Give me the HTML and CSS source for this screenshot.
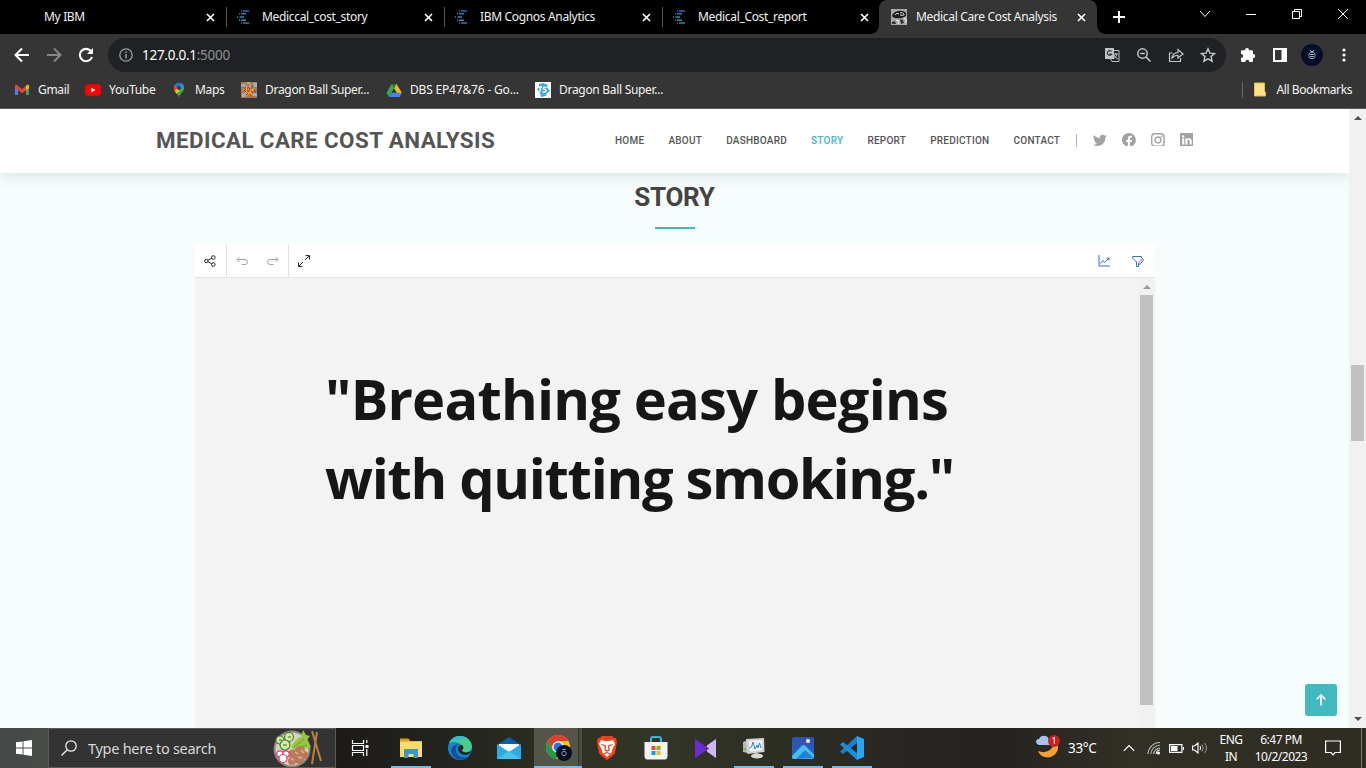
FILE: index.html
```html
<!DOCTYPE html>
<html lang="en">
<head>
<meta charset="utf-8">
<title>Medical Care Cost Analysis</title>
<link rel="stylesheet" href="styles.css">
</head>
<body>
<svg class="defs" aria-hidden="true">
  <symbol id="close" viewBox="0 0 9 9"><path d="M1 1l7 7M8 1l-7 7" stroke="#fff" stroke-width="1.7" fill="none"/></symbol>
  <symbol id="cognos" viewBox="0 0 16 16">
    <g stroke-width="1.4" fill="none">
      <path d="M4 2h1M6 2h6" stroke="#2c6ac0"/><path d="M2 4.800h1M4 4.800h5" stroke="#2f7fb8"/>
      <path d="M0 8h1M2.500 8h4.500" stroke="#2f8cac"/><path d="M2 11.200h1M4 11.200h5" stroke="#3a8fa4"/><path d="M4 14h1M6 14h6" stroke="#2c7fa0"/>
    </g>
  </symbol>
</svg>

<div class="tabs">
  <div class="tab"><span class="fav"></span><span class="tt"><b class="t">My IBM</b></span><svg class="x"><use href="#close"/></svg></div>
  <div class="tab"><svg class="fav"><use href="#cognos"/></svg><span class="tt"><b class="t">Mediccal_cost_story</b></span><svg class="x"><use href="#close"/></svg></div>
  <div class="tab"><svg class="fav"><use href="#cognos"/></svg><span class="tt"><b class="t">IBM Cognos Analytics</b></span><svg class="x"><use href="#close"/></svg></div>
  <div class="tab last"><svg class="fav"><use href="#cognos"/></svg><span class="tt"><b class="t">Medical_Cost_report</b></span><svg class="x"><use href="#close"/></svg></div>
  <div class="tab active">
    <svg class="fav" viewBox="0 0 16 16"><rect width="16" height="16" fill="#a9a9a9"/><path d="M1 7q1-4 6-5 6-1 8 2 1 3-2 4-3 2-6 1-4 1-6-2z" fill="#1c1c1c"/><path d="M4 6q2-3 4-1M9 4q3-1 4 1t-4 1" stroke="#ddd" fill="none"/><path d="M1 13l3-1 1 3H1zM9 10l3 1 1 3-3 1z" fill="#333"/><path d="M5 11l3 1-1 3M13 9l2 1v4" stroke="#eee" fill="none"/></svg>
    <span class="tt"><b class="t">Medical Care Cost Analysis</b></span><svg class="x"><use href="#close"/></svg>
  </div>
  <svg class="plus" viewBox="0 0 12 12"><path d="M6 0v12M0 6h12" stroke="#fff" stroke-width="2"/></svg>
  <div class="winctl">
    <svg width="12" height="12" viewBox="0 0 12 12"><path d="M1 3l5 5.500 5-5.500"/></svg>
    <svg width="12" height="12" viewBox="0 0 12 12"><path d="M1 6.500h10"/></svg>
    <svg width="12" height="12" viewBox="0 0 12 12"><path d="M1.500 3.500h7v7h-7zM3.500 3.500v-2h7v7h-2"/></svg>
    <svg width="12" height="12" viewBox="0 0 12 12"><path d="M1 1l10 10M11 1L1 11"/></svg>
  </div>
</div>

<div class="toolbar">
  <svg class="nav1" viewBox="0 0 16 16"><path d="M15 8H2M8 1.500L1.500 8 8 14.500" stroke="#fff" stroke-width="2" fill="none"/></svg>
  <svg class="nav2" viewBox="0 0 16 16"><path d="M1 8h13M8 1.500L14.500 8 8 14.500" stroke="#868686" stroke-width="2" fill="none"/></svg>
  <svg class="nav3" viewBox="0 0 16 16"><path d="M13.200 4.500A6.200 6.200 0 1 0 14 10" stroke="#fff" stroke-width="2.100" fill="none"/><path d="M15 1v6H9z" fill="#fff"/></svg>
  <div class="omni">
    <svg class="info" viewBox="0 0 14 14"><circle cx="7" cy="7" r="6.200" fill="none" stroke="#9aa0a6" stroke-width="1.300"/><path d="M7 6v4.500M7 3.500v1.500" stroke="#9aa0a6" stroke-width="1.500"/></svg>
    <span class="url"><b class="t">127.0.0.1<i>:5000</i></b></span>
    <div class="omni-icons">
      <svg viewBox="0 0 16 16"><rect x="1" y="1" width="9" height="11" fill="#bfc1c4"/><path d="M7.500 4.500A2.300 2.300 0 1 0 7.700 7H5.500" fill="none" stroke="#333" stroke-width="1.100"/><path d="M10 3.500h5v11H8l-1.500-2.500" fill="none" stroke="#bfc1c4"/><path d="M9 7h5M11.500 6v1M13 7q-1 4-4 5M10 8q1 3 4 4" stroke="#bfc1c4" fill="none"/></svg>
      <svg viewBox="0 0 16 16"><circle cx="6.500" cy="6.500" r="4.700" fill="none" stroke="#c4c6c9" stroke-width="1.500"/><path d="M10 10l4.500 4.500M4.300 6.500h4.400" stroke="#c4c6c9" stroke-width="1.600"/></svg>
      <svg viewBox="0 0 16 16"><path d="M4.500 6H1.500v8.500h11V11" fill="none" stroke="#c4c6c9" stroke-width="1.200"/><path d="M4 11q.5-5 6-5.500V2.500L15 7l-5 4V8.300Q6.500 8 4 11z" fill="none" stroke="#c4c6c9" stroke-width="1.200"/></svg>
      <svg viewBox="0 0 16 16"><path d="M8 1.800l1.900 4.300 4.700.4-3.600 3.100 1.100 4.600L8 11.800l-4.100 2.400L5 9.600 1.400 6.500l4.700-.4z" fill="none" stroke="#c4c6c9" stroke-width="1.400"/></svg>
    </div>
  </div>
  <svg class="ext" viewBox="0 0 16 16"><path d="M1 4.500q0-1.300 1.300-1.300H5V3a2 2 0 0 1 4 0v.2h2.700Q13 3.200 13 4.500V7h.2a2 2 0 0 1 0 4H13v2.700q0 1.300-1.300 1.300H9.200v-.3a1.900 1.900 0 0 0-3.800 0v.3H2.300Q1 15 1 13.700v-2.900h.3a1.900 1.900 0 0 0 0-3.800H1z" fill="#fff"/></svg>
  <svg class="side" viewBox="0 0 14 14"><path d="M1 1h12v12H1z" fill="none" stroke="#fff" stroke-width="2"/><path d="M8.500 1H13v12H8.500z" fill="#fff"/></svg>
  <svg class="avatar" viewBox="0 0 22 22"><circle cx="11" cy="11" r="11" fill="#020d27"/><circle cx="11" cy="11.500" r="3.200" fill="none" stroke="#9aa2b5"/><path d="M9.200 10.500h3.600M9.500 12.500h3M9 6l1 1.500h2L13 6" stroke="#b8bdca" fill="none"/></svg>
  <svg class="dots" viewBox="0 0 4 14"><circle cx="2" cy="2" r="1.600"/><circle cx="2" cy="7" r="1.600"/><circle cx="2" cy="12" r="1.600"/></svg>
</div>

<div class="bookmarks">
  <div class="bm b1"><svg viewBox="0 0 16 16"><path d="M1 3.500V13h3V7z" fill="#4285f4"/><path d="M15 3.500V13h-3V7z" fill="#34a853"/><path d="M1 3.500Q1 2.500 2.500 2.800L8 7l5.500-4.200Q15 2.500 15 4.500V6l-7 5.200L1 6z" fill="#ea4335"/><path d="M12 4l1.500-1.200Q15 2.500 15 4.500V6l-3 2.300z" fill="#fbbc04"/></svg><b class="t">Gmail</b></div>
  <div class="bm b2"><svg viewBox="0 0 16 16"><rect y="2.300" width="16" height="11.500" rx="3" fill="#f00"/><path d="M6.400 5.700v4.700L10.500 8z" fill="#fff"/></svg><b class="t">YouTube</b></div>
  <div class="bm b3"><svg viewBox="0 0 16 16"><path d="M8 .7A5.200 5.200 0 0 0 2.800 6c0 4 4 5 5.200 9.500C9.200 11 13.200 10 13.200 6A5.200 5.200 0 0 0 8 .7z" fill="#34a853"/><path d="M8 .7A5.200 5.200 0 0 0 3.500 3.300L6.500 6 10.800 1.600A5 5 0 0 0 8 .7z" fill="#1a73e8"/><path d="M3.500 3.300Q2 6 3.800 9.200L6.500 6z" fill="#ea4335"/><path d="M3.800 9.200L6.800 5.500l3 2L5.700 12z" fill="#fbbc04"/><path d="M10.800 1.600L8 5l2 2 2.700-3.500z" fill="#4285f4"/><circle cx="8" cy="6" r="1.900" fill="#353535"/></svg><b class="t">Maps</b></div>
  <div class="bm b4"><svg viewBox="0 0 16 16"><rect width="16" height="16" fill="#b0764f"/><path d="M0 2h4v3H0zM12 1h4v4h-4zM1 11h3v4H1zM12 11h4v3h-4zM6 0h3v2H6z" fill="#8fb4c4"/><path d="M4 1l3 4 3-4 1 5 3 1-3 3 1 5-4-3-4 3V9L1 7l4-1z" fill="#e2973a"/><path d="M7 5l2 2-2 3zM10 9l2 2M3 8l2 2M9 12l2 3" stroke="#b5302a" fill="#fbe0a0"/><path d="M5 13l2-2M12 3l-2 4M2 5l3 3M13 8l2 3" stroke="#3e5478"/></svg><b class="t">Dragon Ball Super...</b></div>
  <div class="bm b5"><svg viewBox="0 0 16 16"><path d="M5.500 2h5L16 11h-5z" fill="#fbbc04"/><path d="M5.500 2L8.200 6.300 3 14.500 .5 11z" fill="#34a853"/><path d="M5.400 10.800H16L13.500 15H3z" fill="#4285f4"/><path d="M5.500 2h5L8.200 6.300z" fill="#188038"/></svg><b class="t">DBS EP47&amp;76 - Go...</b></div>
  <div class="bm b6"><svg viewBox="0 0 16 16"><rect width="16" height="16" fill="#fff"/><path d="M4 2l4-1 5 2-1 2 3 4-3 2-1 3-5 1-1-4-3-4 2-2z" fill="#46a6da"/><path d="M3 5h4M5 5v5M11.500 5.500Q8 4.500 8.200 6.800q3 .3 2.800 2T7.500 10" fill="none" stroke="#fff" stroke-width="1.300"/></svg><b class="t">Dragon Ball Super...</b></div>
  <div class="allbm"><svg viewBox="0 0 12 15"><path d="M.5 1h10v8.500l1 .5v4H.5z" fill="#ffe28a" stroke="#e6bd47"/></svg><b class="t">All Bookmarks</b></div>
</div>

<main class="page">
  <div class="content">
    <header class="site">
      <h1><b class="t">MEDICAL CARE COST ANALYSIS</b></h1>
      <nav>
        <a class="t">HOME</a><a class="t">ABOUT</a><a class="t">DASHBOARD</a><a class="t on">STORY</a><a class="t">REPORT</a><a class="t">PREDICTION</a><a class="t">CONTACT</a>
      </nav>
      <div class="social">
        <svg viewBox="0 0 16 16"><path d="M5.026 15c6.038 0 9.341-5.003 9.341-9.334q.002-.211-.006-.422A6.700 6.700 0 0 0 16 3.542a6.700 6.700 0 0 1-1.889.518 3.300 3.300 0 0 0 1.447-1.817 6.500 6.500 0 0 1-2.087.793A3.286 3.286 0 0 0 7.875 6.030a9.320 9.320 0 0 1-6.767-3.429 3.290 3.290 0 0 0 1.018 4.382A3.300 3.300 0 0 1 .64 6.575v.045a3.290 3.290 0 0 0 2.632 3.218 3.200 3.200 0 0 1-.865.115 3 3 0 0 1-.614-.057 3.280 3.280 0 0 0 3.067 2.277A6.600 6.600 0 0 1 .78 13.580a6 6 0 0 1-.78-.045A9.340 9.340 0 0 0 5.026 15"/></svg>
        <svg viewBox="0 0 16 16"><path d="M16 8.049c0-4.446-3.582-8.050-8-8.050C3.580 0-.002 3.603-.002 8.050c0 4.017 2.926 7.347 6.750 7.951v-5.625h-2.030V8.050H6.750V6.275c0-2.017 1.195-3.131 3.022-3.131.876 0 1.791.157 1.791.157v1.980h-1.009c-.993 0-1.303.621-1.303 1.258v1.510h2.218l-.354 2.326H9.250V16c3.824-.604 6.750-3.934 6.750-7.951"/></svg>
        <svg viewBox="0 0 16 16"><rect x=".8" y=".8" width="14.400" height="14.400" rx="3.800" fill="none" stroke="#a2a2a2" stroke-width="1.600"/><circle cx="8" cy="8" r="3.400" fill="none" stroke="#a2a2a2" stroke-width="1.600"/><circle cx="12.200" cy="3.800" r="1"/></svg>
        <svg viewBox="0 0 16 16"><path d="M0 1.146C0 .513.526 0 1.175 0h13.650C15.474 0 16 .513 16 1.146v13.708c0 .633-.526 1.146-1.175 1.146H1.175C.526 16 0 15.487 0 14.854zm4.943 12.248V6.169H2.542v7.225zm-1.200-8.212c.837 0 1.358-.554 1.358-1.248-.015-.709-.520-1.248-1.342-1.248S2.400 3.226 2.400 3.934c0 .694.521 1.248 1.327 1.248zm4.908 8.212V9.359c0-.216.016-.432.080-.586.173-.431.568-.878 1.232-.878.869 0 1.216.662 1.216 1.634v3.865h2.401V9.250c0-2.220-1.184-3.252-2.764-3.252-1.274 0-1.845.700-2.165 1.193v.025h-.016l.016-.025V6.169h-2.400c.030.678 0 7.225 0 7.225z"/></svg>
      </div>
    </header>
    <h2><b class="t">STORY</b></h2>
    <div class="rule"></div>
    <section class="frame">
      <div class="fbar">
        <div class="cell c1"><svg viewBox="0 0 12 12"><g fill="none" stroke="#222"><circle cx="2.300" cy="6" r="1.700"/><circle cx="9.300" cy="2.500" r="1.800"/><circle cx="9.300" cy="9.500" r="1.800"/><path d="M4 5.200l3.700-1.900M4 6.800l3.700 1.900"/></g></svg></div>
        <div class="cell c2"><svg viewBox="0 0 12 12"><path d="M3.500 2L1 4.500 3.500 7M1 4.500h8a2.500 2.500 0 0 1 0 5H5.500" fill="none" stroke="#a5a5a5"/></svg><svg viewBox="0 0 12 12"><path d="M8.500 2L11 4.500 8.500 7M11 4.500H3a2.500 2.500 0 0 0 0 5H6.500" fill="none" stroke="#a5a5a5"/></svg></div>
        <div class="cell c3"><svg viewBox="0 0 12 12"><path d="M7.500 .6h4v4M11.200 .8L7 5M4.500 11.400h-4v-4M.8 11.200L5 7" fill="none" stroke="#222"/></svg></div>
        <div class="right">
          <svg viewBox="0 0 12 12"><path d="M1 0v11h11M2.500 8.500l2.300-3 1.800 2L11 3M8.500 3H11v2.500" fill="none" stroke="#3d6fc2"/></svg>
          <svg viewBox="0 0 12 12"><path d="M9.500 3V1.500H.7v1.700L4.500 7v4.500h2V9M10.500 3.500L6.800 7.800l-.3 1.700 1.700-.4 3.300-4z" fill="none" stroke="#3d6fc2"/></svg>
        </div>
      </div>
      <div class="fbody">
        <p class="quote"><b class="t q1">"Breathing easy begins</b><b class="t q2">with quitting smoking."</b></p>
        <div class="sb inner"><i class="up"></i><i class="thumb"></i></div>
      </div>
    </section>
    <div class="totop"><svg viewBox="0 0 12 12"><path d="M6 11.500V1M1.500 5.500L6 1l4.500 4.500" fill="none" stroke="#fff" stroke-width="1.700"/></svg></div>
  </div>
  <div class="sb outer"><i class="up"></i><i class="thumb"></i><i class="down"></i></div>
</main>

<footer class="taskbar">
  <div class="start"><svg viewBox="0 0 16 16"><path d="M0 2.300L6.600 1.400V7.500H0zM7.500 1.300L16 0v7.500H7.500zM0 8.400h6.600v6.200L0 13.700zM7.500 8.400H16V16l-8.500-1.200z" fill="#fff"/></svg></div>
  <div class="search">
    <svg class="mag" viewBox="0 0 16 16"><circle cx="10" cy="6" r="5.200" fill="none" stroke="#e8e8e8" stroke-width="1.300"/><path d="M6.300 9.700L.5 15.500" stroke="#e8e8e8" stroke-width="1.400"/></svg>
    <b class="t">Type here to search</b>
    <svg class="food" viewBox="0 0 50 38">
      <circle cx="19" cy="20" r="18.500" fill="#8f867b"/><circle cx="19" cy="20" r="16.500" fill="#d9d0bf"/>
      <path d="M18 18q5-9 10-10l2-7 3 5 4 1-3 4 4 7-6 2-8 3z" fill="#95c93d"/><path d="M21 18l10-8M24 19l10-3" stroke="#6f9f20"/>
      <circle cx="7" cy="11" r="4.500" fill="#3f7f26"/><circle cx="7" cy="11" r="3.400" fill="#d5e9a6"/><circle cx="16" cy="8" r="5" fill="#3f7f26"/><circle cx="16" cy="8" r="3.900" fill="#d5e9a6"/><circle cx="12" cy="16" r="5.500" fill="#3f7f26"/><circle cx="12" cy="16" r="4.400" fill="#d5e9a6"/>
      <path d="M10 16h4M15 8h3M6 11h3" stroke="#86ad52" stroke-width="2"/>
      <g fill="#b87a5b"><circle cx="20" cy="25" r="4.500"/><circle cx="27" cy="22" r="5"/><circle cx="31" cy="26" r="4"/><circle cx="26" cy="30" r="5"/><circle cx="19" cy="32" r="4"/></g><path d="M22 23l3 2M25 28l4 1M28 21l3 3M18 30l3 1" stroke="#dba78a" stroke-width="2"/>
      <g fill="#fff" stroke="#df3d78" stroke-width="1.200"><circle cx="7" cy="25" r="3.200"/><circle cx="13" cy="25" r="3.200"/><circle cx="10" cy="29.500" r="4"/></g>
      <path d="M39 2l9 30M44 3l-5 32" stroke="#bb7f43" stroke-width="2"/>
    </svg>
  </div>
  <div class="apps">
    <div class="app tv"><svg viewBox="0 0 18 18"><path d="M1.500 1v3.500h11V1M1.500 17v-3.500h11V17M1.500 6.500h11v5h-11zM15.800 1v3M15.800 10v7" fill="none" stroke="#fff" stroke-width="1.200"/><rect x="14.500" y="6" width="3" height="3" fill="#fff"/></svg></div>
    <div class="app run"><svg viewBox="0 0 24 24"><path d="M1 3h8l2 2h12v16H1z" fill="#f5b72e"/><path d="M1 6h22v15H1z" fill="#ffdb70"/><path d="M1 2.500h8.500l1.500 2H1z" fill="#e09a10"/><path d="M5 13h14v9h-4.500v-4h-5v4H5z" fill="#3d92dc"/></svg></div>
    <div class="app"><svg viewBox="0 0 24 24"><circle cx="12" cy="12" r="12" fill="#1783cf"/><path d="M1 7Q5-.5 13 0q10 1 11 11-1 5-6 5-4 0-4-2 2-2 0-5-5-5-13-2z" fill="#45cf8a"/><path d="M1 7Q4 0 12 0q5 0 8 3-6-2-10 1-6 0-9 3z" fill="#31b7df"/><path d="M11 8q-5 4-2 10 4 5 12 3-5 4-12 2-6-3-6-9 1-5 8-6z" fill="#124f9c"/><path d="M14 9q3 3 0 5 0 2 4 2.500 4-.2 5.500-1.800Q22 19 17 19q-7-1-7-7 1-3 4-3z" fill="#25271f"/></svg></div>
    <div class="app"><svg viewBox="0 0 24 24"><path d="M0 9L12 1l12 8v4H0z" fill="#0a61a9"/><path d="M2 8h20v8H2z" fill="#fff"/><path d="M0 8l12 8 12-8v15H0z" fill="#2ea8e8"/><path d="M0 23l12-8 12 8z" fill="#40c5f5"/></svg></div>
    <div class="app chrome"><svg viewBox="0 0 26 26"><circle cx="12" cy="12" r="12" fill="#fbc116"/><path d="M1.600 6A12 12 0 0 1 22.400 6H12L7 15z" fill="#e33b2e"/><path d="M1.600 6l5.200 9L12 18l-1.500 6A12 12 0 0 1 1.600 6z" fill="#229a4b"/><circle cx="12" cy="12" r="5.800" fill="#fff"/><circle cx="12" cy="12" r="4.500" fill="#2675e8"/><circle cx="18" cy="18" r="8" fill="#061126"/><circle cx="18" cy="18.500" r="2.200" fill="none" stroke="#8b93a5"/><path d="M16.500 14.500h3" stroke="#b0b5c2"/></svg></div>
    <div class="app"><svg viewBox="0 0 24 24"><path d="M7 0h10l2 2 2 0 1 4-2 11q-2 3-8 7-6-4-8-7L2 6l1-4h2z" fill="#f5411d"/><path d="M6 4l4 1h4l4-1 2 4-3 6 0 2-5 5-5-5 0-2-3-6z" fill="#fff"/><path d="M6.500 8.500l4 1.500-.5 4 2 1 2-1-.5-4 4-1.500M9 18l3-1.500 3 1.500" fill="none" stroke="#f5411d" stroke-width="1.300"/></svg></div>
    <div class="app"><svg viewBox="0 0 24 24"><path d="M7 7V3q0-2 2-2h6q2 0 2 2v4" fill="none" stroke="#33b7e8" stroke-width="2"/><path d="M.5 6h23v14q0 3.500-3 3.500h-17q-3 0-3-3.500z" fill="#f3f3f3"/><path d="M7.500 10H11.500v4h-4z" fill="#f25022"/><path d="M12.500 10h4v4h-4z" fill="#7fba00"/><path d="M7.500 15h4v4h-4z" fill="#00a4ef"/><path d="M12.500 15h4v4h-4z" fill="#ffb900"/></svg></div>
    <div class="app"><svg viewBox="0 0 24 24"><path d="M2 3l14 9.500L2 22z" fill="#6a2bd0"/><path d="M23 3v19l-8.500-6q-3-3.500 0-7z" fill="#cdb8f2"/><path d="M13 10.500l3 2-3 2z" fill="#4c1ba6"/></svg></div>
    <div class="app run"><svg viewBox="0 0 24 24"><path d="M1 6l5-2v13l-5-1z" fill="#b9b9b4"/><path d="M4 3l18-1 .5 14-17 2z" fill="#d2d2ce"/><path d="M6.500 5l14-1-.5 10-12 1.500z" fill="#eef5fa"/><path d="M7.500 12l2-1 1.500-5 2 7 2-4 1 3 1.500-5 1.500 5" fill="none" stroke="#3a81b5"/><path d="M12 17h4v3h-4z" fill="#a9a9a5"/><ellipse cx="15" cy="20" rx="6" ry="2.500" fill="#d9d9d4"/><path d="M1 12h3v2H1z" fill="#87b859"/></svg></div>
    <div class="app run"><svg viewBox="0 0 24 24"><defs><linearGradient id="ph" x2="0" y2="1"><stop stop-color="#3450a8"/><stop offset="1" stop-color="#1e66cf"/></linearGradient></defs><rect x="1" y="1" width="22" height="22" rx="2" fill="url(#ph)"/><path d="M1 20L11 9.500q1.500-1 3 0l9 9V21q0 2-2 2H3q-2 0-2-2z" fill="#48bdf2"/><path d="M5 23l8-8q1-1 2 0l8 7z" fill="#1b86d6"/><circle cx="17" cy="5" r="2" fill="#fff"/></svg></div>
    <div class="app run"><svg viewBox="0 0 24 24"><path d="M17 0l7 3v18l-7 3z" fill="#2aa5f0"/><path d="M17 0v7L3 18 0 15.500z" fill="#1b7fc9"/><path d="M0 8.500L3 6l14 11v7z" fill="#1c8ddb"/></svg></div>
  </div>
  <div class="tray">
    <svg class="wx" viewBox="0 0 24 24"><path d="M21 8q3 6-2 11.500-6 5-13 1.500-3-2-4-5 8 3 13-2 3-3 2-7z" fill="#f7a12d"/><path d="M3 10q-3-1-3-3 0-3 3-3 2-4 6-3 3 0 4 4 2 2 1 5z" fill="#a6c3ee"/><circle cx="18" cy="6" r="6" fill="#c9211e"/><text x="18" y="9.200">1</text></svg>
    <b class="t temp">33°C</b>
    <svg class="chev" viewBox="0 0 12 8"><path d="M.8 6.800L6 1.500l5.200 5.300" fill="none" stroke="#fff" stroke-width="1.200"/></svg>
    <svg class="wifi" viewBox="0 0 14 14"><path d="M1 13A12 12 0 0 1 13 1.500M3.800 13A9.200 9.200 0 0 1 13 4.300M6.600 13A6.400 6.400 0 0 1 13 7.100" fill="none" stroke="#bbb" stroke-width="1.100"/><path d="M9 13a4 4 0 0 1 4-4" fill="none" stroke="#fff"/><circle cx="11.500" cy="12" r="1.500" fill="#fff"/></svg>
    <svg class="bat" viewBox="0 0 15 9"><path d="M.6.600h12.300v7.800H.6zM14.500 3v3" fill="none" stroke="#fff" stroke-width="1.200"/><path d="M2 2h6.500v5H2z" fill="#fff"/></svg>
    <svg class="vol" viewBox="0 0 16 12"><path d="M.6 4h2L6 1v10L2.600 8h-2zM8 4q1 2 0 4" fill="none" stroke="#fff" stroke-width="1.100"/><path d="M10 2.500q2.500 3.500 0 7M12.500 1q4 5 0 10" fill="none" stroke="#999"/></svg>
    <div class="two lang"><b class="t">ENG</b><b class="t">IN</b></div>
    <div class="two clock"><b class="t">6:47 PM</b><b class="t">10/2/2023</b></div>
    <svg class="note" viewBox="0 0 16 16"><path d="M.6 1h14.800v11.500H10L8 14.800 6 12.500H.6z" fill="none" stroke="#fff" stroke-width="1.200"/></svg>
    <i class="edge"></i>
  </div>
</footer>
</body>
</html>
```
FILE: styles.css
```css
* { box-sizing: border-box; }
body { margin: 0; width: 1366px; height: 768px; overflow: hidden; background: #000; font-family: "Noto Sans", sans-serif; font-size: 12px; }
svg { display: block; flex: none; }
b, i { font-weight: inherit; font-style: normal; }
.t { white-space: nowrap; }
.defs { display: none; }

.tabs { display: flex; height: 34px; padding-left: 9px; color: #f1f1f1; letter-spacing: -.33px; }
.tab { display: flex; align-items: center; width: 218px; height: 34px; padding-left: 10px; gap: 9px; background: linear-gradient(#555, #555) right 7px / 1px 20px no-repeat; }
.tab.last { background: none; width: 216px; }
.tab.active { position: relative; width: 218px; padding-left: 12px; background: #353535; border-radius: 8px 8px 0 0; }
.tab.active .tt { width: 161px; }
.active::before, .active::after { content: ""; position: absolute; bottom: 0; width: 8px; height: 8px; }
.active::before { left: -8px; background: radial-gradient(circle at 0 0, transparent 7.500px, #353535 8px); }
.active::after { right: -8px; background: radial-gradient(circle at 100% 0, transparent 7.500px, #353535 8px); }
.fav { width: 16px; height: 16px; flex: none; }
.tt { width: 162px; line-height: 34px; }
.x { width: 9px; height: 9px; margin-left: -9px; }
.plus { width: 12px; height: 12px; margin: 11px 0 0 16px; }
.winctl { display: flex; gap: 34px; margin: 8px 0 0 74px; }
.winctl svg { fill: none; stroke: #fff; stroke-width: 1; }

.toolbar { display: flex; align-items: center; height: 38px; padding: 4px 0 0 14px; background: #353535; }
.nav1, .nav2, .nav3 { width: 16px; height: 16px; margin-right: 16px; }
.nav3 { margin-right: 14px; }
.omni { display: flex; align-items: center; width: 1118px; height: 34px; border-radius: 17px; background: #202124; padding-left: 11px; }
.info { width: 14px; height: 14px; margin-right: 9px; }
.url { color: #fff; font-size: 13.500px; letter-spacing: -.27px; padding-bottom: 1px; }
.url i { color: #8d9094; }
.omni-icons { display: flex; gap: 16px; margin: 0 10px 0 auto; }
.omni-icons svg { width: 16px; height: 16px; }
.ext { width: 16px; height: 16px; margin-left: 14px; }
.side { width: 14px; height: 14px; margin-left: 17px; }
.avatar { width: 22px; height: 22px; margin-left: 14px; }
.dots { width: 4px; height: 14px; margin-left: 19px; fill: #fff; }

.bookmarks { display: flex; align-items: center; height: 37px; padding: 0 14px 1px; background: #353535; border-bottom: 1px solid #5b5858; color: #f4f4f4; letter-spacing: -.3px; }
.bm { display: flex; align-items: center; gap: 8px; }
.bm svg { width: 16px; height: 16px; }
.b1 { width: 71px; } .b2 { width: 86px; } .b3 { width: 70px; } .b4 { width: 145px; } .b5 { width: 149px; letter-spacing: -.18px; }
.allbm { display: flex; align-items: center; gap: 10px; height: 16px; margin-left: auto; padding-left: 11px; border-left: 1px solid #696969; letter-spacing: -.4px; }
.allbm svg { width: 12px; height: 15px; }

.page { display: flex; height: 619px; }
.content { position: relative; width: 1349px; height: 619px; background: #f7fdfd; overflow: hidden; }
.site { display: flex; align-items: center; height: 64px; padding: 0 0 2px 156px; background: #fff; box-shadow: 0 2px 15px rgba(0,0,0,.12); font-family: Roboto, sans-serif; }
h1 { margin: 0; width: 459px; font-size: 22.400px; line-height: 62px; font-weight: 700; color: #555; letter-spacing: .4px; }
nav { display: flex; gap: 24.100px; font-size: 10px; font-weight: 500; color: #555; letter-spacing: .23px; }
.on { color: #40b9c0; }
.social { display: flex; gap: 15px; height: 13px; margin-left: 16px; padding-left: 16px; border-left: 1px solid #b5b5b5; fill: #a2a2a2; }
.social svg { width: 13.800px; height: 13.800px; margin-top: -1px; }
h2 { margin: 7px 0 0; text-align: center; font: 700 26px/34px Roboto, sans-serif; letter-spacing: -.3px; color: #444; }
.rule { width: 40px; height: 2px; margin: 13px auto 0; background: #40b9b9; }
.frame { width: 960px; margin: 16px 0 0 195px; background: #f3f3f3; }
.fbar { display: flex; height: 33px; background: #fff; border-bottom: 1px solid #e2e2e2; }
.cell { display: flex; align-items: center; border-right: 1px solid #e0e0e0; }
.fbar svg { width: 12px; height: 12px; }
.c1 { width: 32px; padding-left: 9px; }
.c2 { width: 62px; padding-left: 9px; gap: 19px; }
.c3 { border: 0; padding-left: 9px; }
.right { display: flex; align-items: center; gap: 22px; margin: 0 11px 0 auto; }
.fbody { display: flex; justify-content: space-between; height: 450px; }
.quote { margin: 81px 0 0 130px; font: 700 56px/79px "Open Sans", sans-serif; color: #161616; }
.quote b { display: table; }
.q1 { letter-spacing: -.8px; }
.q2 { letter-spacing: -1.300px; }
.sb { width: 17px; display: flex; flex-direction: column; align-items: center; background: #f1f1f1; }
.sb i { flex: none; }
.up { border: 4px solid transparent; border-top: 0; border-bottom: 4px solid #999; margin-top: 7px; }
.down { border: 4px solid transparent; border-bottom: 0; border-top: 4px solid #505050; }
.thumb { width: 13px; background: #c1c1c1; }
.inner .thumb { height: 410px; margin-top: 6px; }
.outer .up { border-bottom-color: #505050; }
.outer .thumb { height: 76px; margin-top: 245px; }
.outer .down { margin-top: 276px; }
.totop { position: absolute; right: 12px; bottom: 12px; width: 32px; height: 32px; border-radius: 3px; background: #40b9bf; padding: 10px; }
.totop svg { width: 12px; height: 12px; }

.taskbar { display: flex; height: 40px; color: #fff; background: linear-gradient(90deg, #474848 0, #454c46 48px, #1d1b19 336px, #20201d 410px, #2c2f21 560px, #333627 650px, #2c2d23 800px, #282622 900px, #25231f 1000px, #313026 1130px, #2e2c23 100%); }
.start { width: 48px; padding: 12px 16px; }
.start svg { width: 16px; height: 16px; }
.search { display: flex; align-items: center; width: 288px; border: 1px solid #5b5b5b; background: #333; font-size: 14.500px; letter-spacing: -.28px; color: #d8d8d8; padding-left: 12px; }
.mag { width: 16px; height: 16px; margin-right: 11px; }
.food { width: 50px; height: 38px; margin: 0 12px 0 auto; }
.apps { display: flex; }
.app { width: 49px; height: 40px; display: flex; align-items: center; justify-content: center; }
.app svg { width: 24px; height: 24px; }
.app.tv { width: 50px; padding-right: 2px; }
.tv svg { width: 18px; height: 18px; }
.run { background: linear-gradient(#76b9ed, #76b9ed) center bottom / 40px 2px no-repeat; }
.chrome { width: 49px; padding-left: 2px; background: linear-gradient(#76b9ed, #76b9ed) 1px bottom / 100% 2px no-repeat, linear-gradient(90deg, transparent 1px, #54554a 1px, #54554a 45px, #333429 45px, #333429 46px, #4a4b3d 46px); }
.app.chrome svg { width: 26px; height: 26px; }
.tray { display: flex; align-items: center; margin-left: auto; width: 330px; }
.wx { width: 24px; height: 24px; margin-top: -3px; }
.wx text { font: 9px "Noto Sans", sans-serif; fill: #fff; text-anchor: middle; }
.temp { width: 30px; margin-left: 8px; font-size: 13.500px; letter-spacing: -.3px; }
.chev { width: 12px; height: 8px; margin-left: 25px; }
.wifi { width: 14px; height: 14px; margin-left: 12px; }
.bat { width: 15px; height: 9px; margin-left: 8px; }
.vol { width: 16px; height: 12px; margin-left: 8px; }
.two { display: flex; flex-direction: column; align-items: center; line-height: 17px; letter-spacing: -.5px; }
.lang { width: 30px; margin-left: 8px; }
.clock { width: 60px; margin-left: 5px; }
.note { width: 16px; height: 16px; margin-left: 14px; }
.edge { width: 1px; height: 40px; margin-left: 20px; background: #777; }
```
